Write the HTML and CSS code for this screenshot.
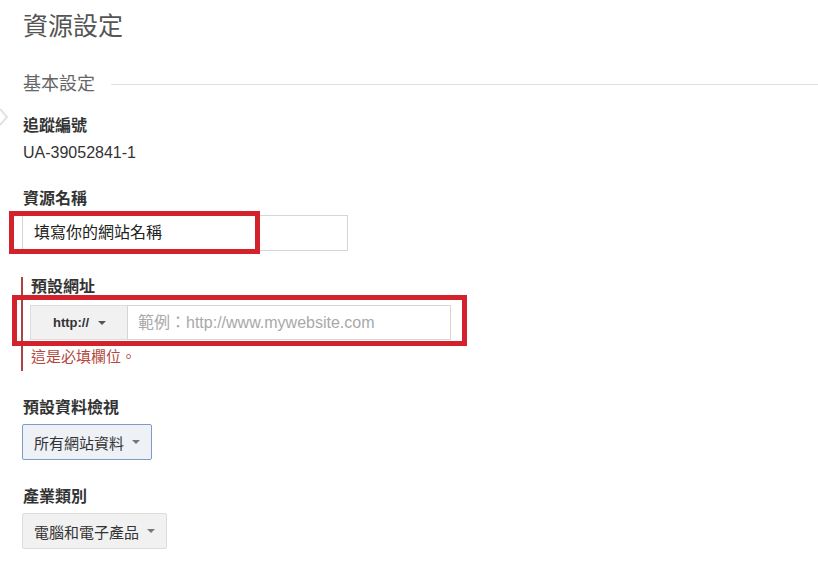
FILE: index.html
```html
<!DOCTYPE html>
<html lang="zh-Hant">
<head>
<meta charset="utf-8">
<link rel="stylesheet" href="styles.css">
</head>
<body>
<div class="page">
  <svg class="pointer" width="10" height="22" viewBox="0 0 10 22"><polyline points="0,2 7,10 0,18" fill="none" stroke="#e2e2e2" stroke-width="2"/></svg>
  <h1 class="title">資源設定</h1>
  <div class="section-head"><span>基本設定</span><div class="rule"></div></div>

  <div class="field first">
    <div class="label">追蹤編號</div>
    <div class="value">UA-39052841-1</div>
  </div>

  <div class="field">
    <div class="label">資源名稱</div>
    <div class="annot-wrap">
      <div class="text-input">填寫你的網站名稱</div>
      <div class="annot annot-name"></div>
    </div>
  </div>

  <div class="field error">
    <div class="label">預設網址</div>
    <div class="annot-wrap">
      <div class="url-row">
        <div class="proto">http:// <span class="caret"></span></div>
        <div class="url-input">範例：http://www.mywebsite.com</div>
      </div>
      <div class="annot annot-url"></div>
    </div>
    <div class="err-msg">這是必填欄位。</div>
  </div>

  <div class="field gap-lg">
    <div class="label">預設資料檢視</div>
    <div class="select focused">所有網站資料 <span class="caret"></span></div>
  </div>

  <div class="field gap-lg">
    <div class="label">產業類別</div>
    <div class="select">電腦和電子產品 <span class="caret"></span></div>
  </div>
</div>
</body>
</html>
```
FILE: styles.css
```css
* { box-sizing: border-box; }
html, body { margin: 0; padding: 0; background: #fff; }
body {
  font-family: "Liberation Sans", Arial, "Noto Sans CJK TC", sans-serif;
  color: #333;
}
.page {
  position: relative;
  padding: 10px 0 0 23px;
  width: 818px;
  height: 574px;
  overflow: hidden;
}
.pointer { position: absolute; left: 0; top: 107px; }
.title {
  margin: 0;
  font-size: 25px;
  line-height: 32px;
  font-weight: normal;
  color: #555;
}
.section-head {
  display: flex;
  align-items: center;
  gap: 16px;
  margin-top: 30px;
  font-size: 18px;
  line-height: 24px;
  color: #666;
}
.section-head .rule { flex: 1; height: 1px; background: #e0e0e0; }
.field { margin-top: 26px; display: flex; flex-direction: column; align-items: flex-start; }
.field.first { margin-top: 20px; }
.field.gap-lg { margin-top: 27px; }
.label { font-size: 16px; line-height: 20px; font-weight: bold; color: #333; }
.value { margin-top: 7px; font-size: 16px; line-height: 20px; color: #333; }
.annot-wrap { position: relative; margin-top: 6px; margin-left: -1px; }
.text-input {
  width: 326px;
  height: 36px;
  border: 1px solid #d6d6d6;
  padding: 0 0 0 11px;
  font-size: 16px;
  line-height: 34px;
  color: #222;
}
.annot { position: absolute; border: 5px solid #d3222c; }
.annot-name { left: -13px; top: -4px; width: 251px; height: 43px; }
.field.error {
  border-left: 2px solid #a94442;
  margin-left: -2px;
  padding-left: 8px;
  padding-bottom: 4px;
}
.field.error .annot-wrap { margin-top: 8px; margin-left: -1px; }
.url-row { display: flex; height: 35px; }
.proto {
  width: 97px;
  background: #f1f1f1;
  border: 1px solid #dcdcdc;
  border-right: none;
  display: flex;
  align-items: center;
  padding-left: 22px;
  gap: 9px;
  font-size: 13px;
  font-weight: bold;
  color: #333;
}
.url-input {
  width: 324px;
  border: 1px solid #d6d6d6;
  padding-left: 10px;
  font-size: 16px;
  line-height: 33px;
  color: #a9a9a9;
}
.annot-url { left: -18px; top: -10px; width: 455px; height: 51px; }
.err-msg { margin-top: 7px; font-size: 15px; line-height: 20px; color: #b5473d; }
.caret {
  display: inline-block;
  width: 0; height: 0;
  border-left: 4px solid transparent;
  border-right: 4px solid transparent;
  border-top: 4px solid #555;
}
.select {
  margin-top: 6px;
  margin-left: -1px;
  height: 36px;
  display: flex;
  align-items: center;
  gap: 8px;
  padding: 0 11px 0 11px;
  background: #f1f1f1;
  border: 1px solid #dcdcdc;
  border-radius: 2px;
  font-size: 15px;
  color: #333;
}
.select .caret { border-top-color: #777; }
.select.focused { background: #eef1f6; border-color: #7f9cc8; }
```
